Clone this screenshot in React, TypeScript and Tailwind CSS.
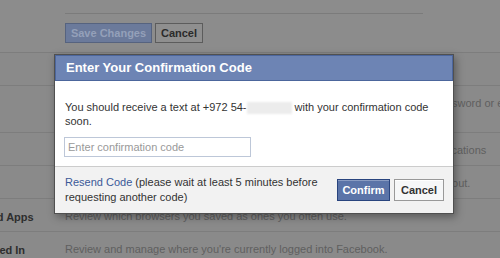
import React from 'react'

const font = { fontFamily: '"Liberation Sans", Arial, sans-serif' }

function Row({ label, labelClass = '-ml-[100px]', text, tall }: { label?: string; labelClass?: string; text: string; tall?: boolean }) {
  return (
    <div className={`flex border-b border-[#7d7d7d] ${tall ? 'h-[47px]' : 'h-[33px]'}`}>
      <div className="w-[65px] shrink-0 overflow-hidden">
        <div className={`${labelClass} pt-[10px] whitespace-nowrap text-[11px] font-bold text-[#2e2e2e]`}>{label}</div>
      </div>
      <div className="flex-1 overflow-hidden pt-[10px] whitespace-nowrap text-[11px] leading-[14px] text-[#5f5f5f]">{text}</div>
    </div>
  )
}

export default function App() {
  return (
    <div className="relative h-[258px] w-[500px] overflow-hidden bg-[#8a8a8a]" style={font}>
      {/* dimmed settings page */}
      <div className="h-[53px] border-b border-[#7d7d7d] bg-[#8c8c8c] pl-[65px]">
        <div className="h-[14px] w-[358px] border-b border-[#7b7b7b]" />
        <div className="mt-[9px] flex gap-[3px]">
          <button className="h-[20px] w-[87px] border border-[#56637f] bg-[#6b7a9b] text-[11px] font-bold text-[#94a0b9]">Save Changes</button>
          <button className="h-[20px] w-[48px] border border-[#5c5c5c] bg-[#8f8f8f] text-[11px] font-bold text-[#2b2b2b]">Cancel</button>
        </div>
      </div>
      <Row text="" />
      <Row tall text="Get an alert when somebody tries to log in to your account or changes your password or email address." />
      <Row text="Get alerts when someone logs in to your account from a new device using notifications" />
      <Row text="Use your phone as an extra layer of security at each login to keep other people out." />
      <Row label="Trusted Browsers and Apps" labelClass="-ml-[112px]" text="Review which browsers you saved as ones you often use." />
      <Row label="Where You're Logged In" text="Review and manage where you're currently logged into Facebook." />

      {/* dialog */}
      <div className="absolute left-[54px] top-[54px] w-[400px] border border-[#505050] bg-white shadow-[2px_3px_8px_rgba(0,0,0,0.35)]">
        <div className="flex h-[26px] items-center border border-[#4c669c] bg-[#6d84b4] px-[10px] text-[13px] font-bold text-white">
          Enter Your Confirmation Code
        </div>
        <div className="px-[10px] pt-[19px] pb-[9px] text-[11px] leading-[14px] text-[#333]">
          <p>
            You should receive a text at +972 54-
            <span className="inline-block h-[12px] w-[45px] align-middle bg-[#ececec] blur-[1px]" />
            {' '}with your confirmation code soon.
          </p>
          <input
            placeholder="Enter confirmation code"
            className="mt-[9px] -ml-px h-[20px] w-[187px] border border-[#bdc7d8] px-[3px] text-[11px] text-[#333] placeholder:text-[#999] outline-none"
          />
        </div>
        <div className="flex h-[47px] items-center justify-between border-t border-[#ccc] bg-[#f2f2f2] pl-[10px] pr-[9px]">
          <p className="w-[262px] text-[11px] leading-[15px] text-[#333]">
            <a className="text-[#3b5998]">Resend Code</a> (please wait at least 5 minutes before requesting another code)
          </p>
          <div className="flex gap-[4px]">
            <button className="h-[22px] w-[53px] border border-[#29447e] bg-[#5b74a8] text-[11px] font-bold text-white shadow-[inset_0_1px_0_#8a9cc2]">Confirm</button>
            <button className="h-[22px] w-[50px] border border-[#999] bg-[#f6f7f8] text-[11px] font-bold text-[#333] shadow-[inset_0_1px_0_#fff]">Cancel</button>
          </div>
        </div>
      </div>
    </div>
  )
}
